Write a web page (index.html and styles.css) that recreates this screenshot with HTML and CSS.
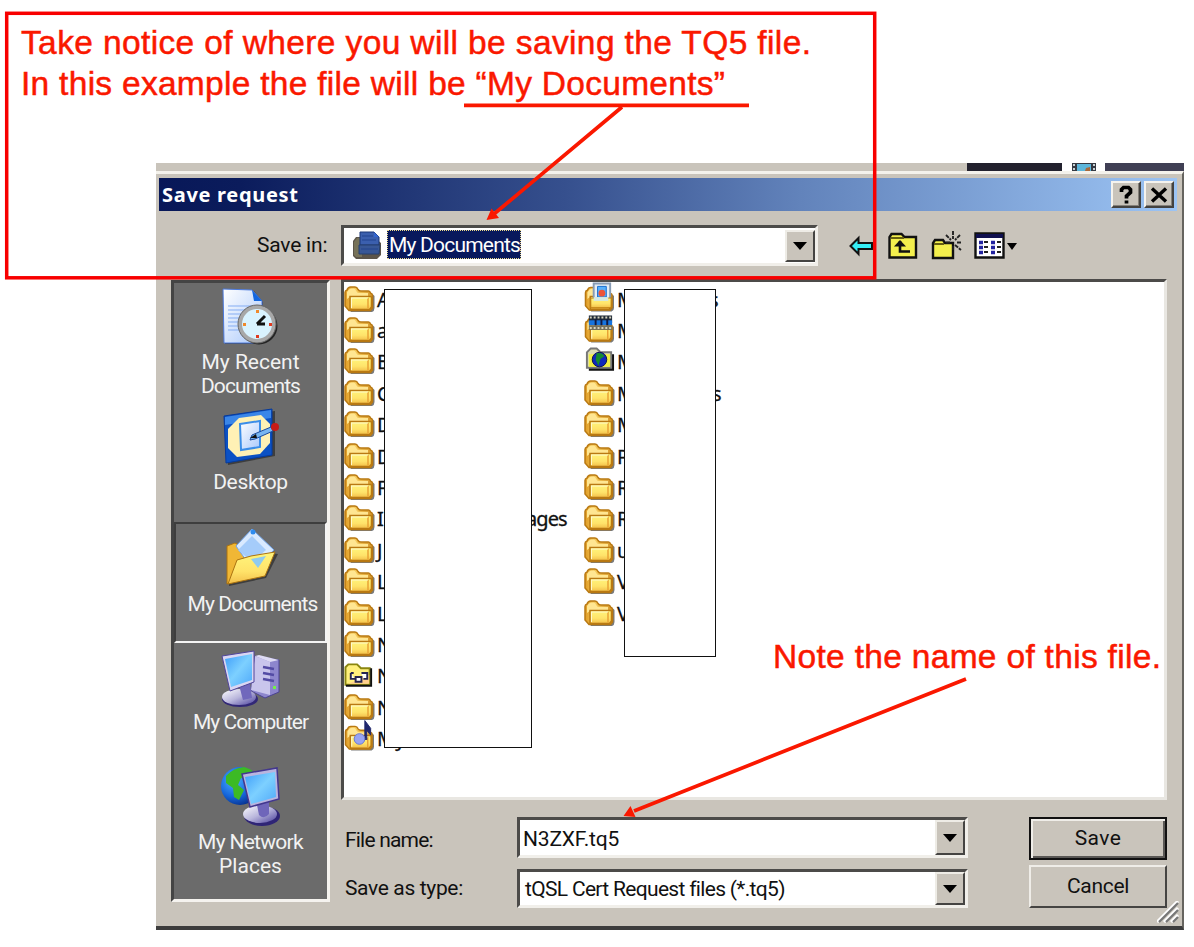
FILE: index.html
```html
<!DOCTYPE html>
<html lang="en">
<head>
<meta charset="utf-8">
<title>Save request</title>
<link rel="stylesheet" href="styles.css">
</head>
<body>
<svg class="defs" width="0" height="0" aria-hidden="true">
  <defs>
    <linearGradient id="gold" x1="0" y1="0" x2="0" y2="1"><stop offset="0" stop-color="#fff57c"/><stop offset=".6" stop-color="#ffe36a"/><stop offset="1" stop-color="#f3bf49"/></linearGradient>
    <linearGradient id="goldback" x1="0" y1="0" x2="1" y2="0"><stop offset="0" stop-color="#e09c26"/><stop offset=".4" stop-color="#f6cb5c"/><stop offset="1" stop-color="#d4952b"/></linearGradient>
    <linearGradient id="paper" x1="0" y1="0" x2="1" y2="1"><stop offset="0" stop-color="#ffffff"/><stop offset="1" stop-color="#a9c8fb"/></linearGradient>
    <linearGradient id="screen" x1="0" y1="0" x2="1" y2="1"><stop offset="0" stop-color="#3d9dfa"/><stop offset=".5" stop-color="#7dd0ff"/><stop offset="1" stop-color="#4fa9fa"/></linearGradient>
    <linearGradient id="metal" x1="0" y1="0" x2="1" y2="1"><stop offset="0" stop-color="#ffffff"/><stop offset=".5" stop-color="#b9b6dc"/><stop offset="1" stop-color="#4a409c"/></linearGradient>
    <radialGradient id="globe" cx=".35" cy=".35" r=".7"><stop offset="0" stop-color="#4fb0ff"/><stop offset=".6" stop-color="#1769dd"/><stop offset="1" stop-color="#06318f"/></radialGradient>
    <symbol id="folder" viewBox="0 0 31 28">
      <path d="M4 23L7 27H28Q30.500 26 30.500 23V11l-2-2v14z" fill="#222" opacity=".6"/>
      <path d="M1 21V7.500Q1 5.500 3 5Q4 2 6.500 2H11q2 0 3 2.500Q15 6 17 6H24.500Q26 6 26.500 8Q28.500 8.500 28.500 10.500V23l-2 2.500H5z" fill="url(#goldback)" stroke="#b97912" stroke-width="1.500"/>
      <path d="M3 7q2-3.500 4.500-3.500H10q1 0 2.500 3Q13 8 15.500 8H24v3H7L3 14z" fill="#ffe692"/>
      <path d="M6 11.500h20.500q1 0 1 1.500v9l-2 2.500H6z" fill="url(#gold)" stroke="#b97912" stroke-width="1.500"/>
      <path d="M24 13v10.500" stroke="#e9a334" stroke-width="1.500"/><path d="M7 13h17M7.500 13v10" stroke="#fff9cf"/>
    </symbol>
  </defs>
</svg>

<main class="page">
  <section class="dialog">
    <div class="behind">
      <span class="dark first"></span>
      <svg width="24" height="8" viewBox="0 0 24 8"><path fill="#353942" d="M0 0h24v8H0z"/><path fill="#5db6da" d="M5 1h14v7H5z"/><path fill="#c9d2d5" d="M1 1h2v2H1zM1 5h2v2H1zM21 1h2v2h-2zM21 5h2v2h-2z"/><path fill="#a8683a" d="M14 5l4-1v4h-5z"/></svg>
      <span class="dark last"></span>
    </div>
    <div class="window">
      <header class="titlebar">
        <h1>Save request</h1>
        <button class="capbtn"><svg width="16" height="20" viewBox="0 0 16 20"><path d="M3.500 7V4.500L5.500 2.500h5l2 2v3l-4 3.500v2.500M8.500 15.500v3" fill="none" stroke="#000" stroke-width="3.700"/></svg></button>
        <button class="capbtn"><svg width="18" height="16" viewBox="0 0 18 16"><path d="M2 1.500l14 13M16 1.500l-14 13" stroke="#000" stroke-width="3.400"/></svg></button>
      </header>

      <div class="toolbar">
        <label>Save in:</label>
        <div class="combo place">
          <svg class="placeicon" width="30" height="29" viewBox="0 0 30 29"><path d="M1 10l3-4h18l7 6v12l-4 4H4l-3-3z" fill="#5c554a"/><path d="M2 11l3-4h5v19H4l-2-2z" fill="#777259"/><path d="M8 1h14l5 5v8H8z" fill="#3b5fae" stroke="#1b3676"/><path d="M22 1v5h5" fill="#3265d0"/><path d="M7 14h21l-1 9H7z" fill="#385796" stroke="#27406f"/><path d="M10 5h11M10 9h14M9 18h17" stroke="#23458f"/></svg>
          <span class="selected">My Documents</span>
          <i class="drop"></i>
        </div>
        <div class="tools">
          <svg class="back" width="24" height="22" viewBox="0 0 24 22"><path d="M1.500 11l8-8v5H23v6H9.500v5z" fill="#35eef5" stroke="#111" stroke-width="2"/></svg>
          <svg class="up" width="30" height="28" viewBox="0 0 30 28"><path d="M1.500 25.500V5l2-3h10l3 3H28v20.500z" fill="#f3ef4d" stroke="#111" stroke-width="2.400"/><path d="M3 6h13" stroke="#665f10" stroke-width="2"/><path d="M12 9v10.500h10" fill="none" stroke="#111" stroke-width="2.600"/><path d="M12 8l-6 6.500h12z" fill="#111"/></svg>
          <svg class="new" width="32" height="32" viewBox="0 0 32 32"><path d="M2 29V14l2-3h8l2 3h8v15z" fill="#f3ef4d" stroke="#111" stroke-width="2.400"/><path d="M3 15h10" stroke="#665f10" stroke-width="2"/><path d="M22 2v8M22 17v5M15 6l5 5M29 6l-5 5M26 13.500h5M24 16l6 5M15 13.500h4" stroke="#222" stroke-width="1.900" stroke-dasharray="4 1"/></svg>
          <svg class="view" width="31" height="27" viewBox="0 0 31 27"><path d="M1.500 1.500h28v24h-28z" fill="#fff" stroke="#111" stroke-width="2.400"/><path d="M2 2h27v4H2z" fill="#10104f"/><path d="M5 10.500h4M5 15.500h4M5 20.500h4M17 10.500h4M17 15.500h4M17 20.500h4" stroke="#2222a0" stroke-width="3.500"/><path d="M10 10h4M10 15h4M10 20h4M23 10h4M23 15h4M23 20h4" stroke="#222" stroke-width="2"/></svg>
          <i class="caret"></i>
        </div>
      </div>

      <div class="body">
        <nav class="places">
          <a class="p1"><svg width="58" height="58" viewBox="0 0 58 58"><path d="M3 2l29 1 9 11v42H3z" fill="#222" opacity=".6"/><path d="M1 1l29 1 10 11v42H2z" fill="url(#paper)" stroke="#4b79dd"/><path d="M30 2l2 11h8z" fill="#1467df"/><path d="M6 18h24M6 22h20M6 26h14M6 30h12M6 34h10M6 38h10M6 42h12" stroke="#85adf3"/><circle cx="37" cy="38" r="18.500" fill="#252525"/><circle cx="35" cy="36" r="17" fill="#d9f3ff" stroke="#a8a8a8" stroke-width="4"/><circle cx="35" cy="36" r="19" fill="none" stroke="#666"/><path d="M35 36l8-8M35 36h8" stroke="#111" stroke-width="3"/><path d="M34 22h3v3h-3zM21 35h3v3h-3z" fill="#f08a2c"/><path d="M47 35h3v3h-3zM34 47h3v3h-3z" fill="#e03a20"/></svg><span><span class="recent">My Recent</span><span class="docs">Documents</span></span></a>
          <a class="p2"><svg width="58" height="58" viewBox="0 0 58 58"><path d="M4 10L53 4v45L6 58z" fill="#202020" opacity=".6"/><path d="M2 9L50 2v46L4 56z" fill="#0b51c4" stroke="#063a9c"/><path d="M3 10L49 3v8L3 18z" fill="#3a86e8"/><path d="M17 11l22-3 9 9v19l-10 11-23 3-9-9V22z" fill="#fff1b5"/><path d="M18 17l20-3v26l-19 3z" fill="url(#paper)" stroke="#3b8de8" stroke-width="2"/><path d="M30 28l19-8 2 4-18 8-5 1z" fill="#77b5f2" stroke="#1b499a"/><circle cx="53" cy="20" r="4" fill="#c61b16"/><path d="M28 31l6-4 1 4z" fill="#111"/></svg><span>Desktop</span></a>
          <a class="p3 active"><svg width="54" height="60" viewBox="0 0 54 60"><path d="M5 58V20l7-2 9 5 33 3-12 24z" fill="#202020" opacity=".6"/><path d="M3 18l8-3 9 5v30L3 56z" fill="#f0b735" stroke="#ab7311"/><path d="M12 18L28 1l22 21-21 20z" fill="#d9eaff" stroke="#6ea2e8"/><path d="M28 8l14 14-14 12-14-12z" fill="#a5ccfa"/><circle cx="29" cy="4" r="2.500" fill="#2e8cf0"/><path d="M4 56l9-24 14-4 24-4-10 24z" fill="url(#gold)" stroke="#ab7311"/><path d="M27 31l15-3-8 12z" fill="#8fcbef"/></svg><span>My Documents</span></a>
          <a class="p4"><svg width="60" height="58" viewBox="0 0 60 58"><path d="M34 6l24 4v32L44 48 30 41z" fill="#8d86cd" stroke="#4b4292"/><path d="M34 6l15 6v33l-19-5z" fill="#c9c5ec"/><path d="M34 6l15 6 9-2-20-5z" fill="#dedbf4"/><path d="M42 17l11 2M42 23l11 2M42 29l11 2" stroke="#534ba4" stroke-width="2.500"/><path d="M52 36h3v3h-3z" fill="#72f04a"/><ellipse cx="19" cy="49" rx="18" ry="8" fill="#322877"/><ellipse cx="18" cy="47" rx="17" ry="8" fill="url(#metal)"/><path d="M18 35l11-2 2 15-9 2z" fill="#7068bc"/><path d="M1 6L33 1v31L9 41z" fill="#d9d6f2" stroke="#50459b"/><path d="M4 9l27-5v26L10 37z" fill="url(#screen)"/></svg><span>My Computer</span></a>
          <a class="p5"><svg width="60" height="62" viewBox="0 0 60 62"><circle cx="19" cy="21" r="19" fill="url(#globe)"/><path d="M5 11q7-8 18-9 8 2 10 6l-7 6-6-1-3 7 6 5-5 10-5-3-1-9-7-5z" fill="#3cba25"/><ellipse cx="41" cy="51" rx="18" ry="10" fill="#2f2576"/><ellipse cx="39" cy="49" rx="17" ry="9" fill="url(#metal)"/><path d="M35 35h13v14q-5 6-10 1z" fill="#6f66ba"/><path d="M21 9l35-6 2 31-29 8z" fill="#b9b5df" stroke="#43378e" stroke-width="1.500"/><path d="M24 12l30-5 1 25-25 7z" fill="url(#screen)"/></svg><span><span class="network">My Network</span>Places</span></a>
        </nav>

        <div class="main">
          <div class="files">
            <ul class="col">
              <li><svg><use href="#folder"/></svg><b>A</b></li>
              <li><svg><use href="#folder"/></svg><b>a</b></li>
              <li><svg><use href="#folder"/></svg><b>B</b></li>
              <li><svg><use href="#folder"/></svg><b>C</b></li>
              <li><svg><use href="#folder"/></svg><b>D</b></li>
              <li><svg><use href="#folder"/></svg><b>D</b></li>
              <li><svg><use href="#folder"/></svg><b>F</b></li>
              <li><svg><use href="#folder"/></svg><b>I</b><em class="tail-a">ages</em></li>
              <li><svg><use href="#folder"/></svg><b>J</b></li>
              <li><svg><use href="#folder"/></svg><b>L</b></li>
              <li><svg><use href="#folder"/></svg><b>L</b></li>
              <li><svg><use href="#folder"/></svg><b>N</b></li>
              <li><svg viewBox="0 0 32 28"><path d="M1.500 24V6l3-3h9l4 4h9v17z" fill="#fff07c" stroke="#8a8610" stroke-width="2"/><path d="M4 23l22-9v9z" fill="#ffcf8c"/><path d="M2 25h26V7" fill="none" stroke="#111" stroke-width="2"/><path d="M7 12v6h4M7 12h3M12 16h6v5h-6zM18 12h6v6h-4" fill="#fff" stroke="#24244f" stroke-width="2"/></svg><b>N</b></li>
              <li><svg><use href="#folder"/></svg><b>N</b></li>
              <li><svg viewBox="0 0 32 28" class="over"><use href="#folder" width="32" height="28"/><path d="M21.500 16V-4l6 8v7l-4-5v10" fill="#20276c" stroke="#20276c"/><circle cx="16" cy="15" r="5.500" fill="#98a4f2" stroke="#6878ce"/></svg><b>My</b></li>
            </ul>
            <ul class="col second">
              <li><svg viewBox="0 0 32 28" class="over"><use href="#folder" width="32" height="28"/><path d="M10-2h17v18H10z" fill="#e4ecf5" stroke="#879bb4" stroke-width="2"/><path d="M14 1h9v11h-9z" fill="#58b0fb" stroke="#156cd0"/><circle cx="18.500" cy="8" r="3.500" fill="#ed5338"/><path d="M7 13h21v10H7z" fill="url(#gold)" stroke="#bd7c10"/><path d="M10 12h15v4H10z" fill="#d5e9e4"/></svg><b>M</b><em class="tail-b">s</em></li>
              <li><svg viewBox="0 0 32 28" class="over"><use href="#folder" width="32" height="28"/><path d="M5-1h24v8H5z" fill="#222c39"/><path d="M5 4h24v5H5z" fill="#1674e0"/><path d="M5 9h24v5H5z" fill="#75705d"/><path d="M6 1h23M6 12h23" stroke="#d6d3c0" stroke-width="2" stroke-dasharray="2 2"/><path d="M12 3v6M18 3v6M24 3v6" stroke="#111a42" stroke-width="2"/></svg><b>M</b></li>
              <li><svg viewBox="0 0 32 28"><path d="M5 24h26V7h-3v14H5z" fill="#111"/><path d="M3 21V5l4-4h6l4 4h11v16z" fill="#dedcb0" stroke="#777" stroke-width="2"/><path d="M5 7h22v13H5z" fill="#f2ef43"/><circle cx="16" cy="12.500" r="7.500" fill="#1028bc" stroke="#090e50"/><path d="M13 6q6-1 8 3l-4 3-2 7-3-6z" fill="#168b30"/></svg><b>M</b></li>
              <li><svg><use href="#folder"/></svg><b>M</b><em class="tail-c">s</em></li>
              <li><svg><use href="#folder"/></svg><b>M</b></li>
              <li><svg><use href="#folder"/></svg><b>P</b></li>
              <li><svg><use href="#folder"/></svg><b>R</b></li>
              <li><svg><use href="#folder"/></svg><b>R</b></li>
              <li><svg><use href="#folder"/></svg><b>u</b></li>
              <li><svg><use href="#folder"/></svg><b>V</b></li>
              <li><svg><use href="#folder"/></svg><b>V</b></li>
            </ul>
          </div>
          <div class="form">
            <label class="namelabel">File name:</label><div class="combo"><span class="value name">N3ZXF.tq5</span><i class="drop"></i></div><button class="action default">Save</button>
            <label class="typelabel">Save as type:</label><div class="combo typecombo"><span class="value type">tQSL Cert Request files (*.tq5)</span><i class="drop"></i></div><button class="action cancel">Cancel</button>
          </div>
        </div>
      </div>
      <svg class="grip" width="22" height="22" viewBox="0 0 22 22"><path d="M0 21L21 0M7 21L21 7M14 21l7-7" stroke="#fff" stroke-width="3"/><path d="M2 21L21 2M9 21L21 9M16 21l5-5" stroke="#777" stroke-width="2.200"/></svg>
    </div>
  </section>

  <div class="mask left"></div>
  <div class="mask right"></div>
  <svg class="notes" width="1194" height="947" viewBox="0 0 1194 947">
    <rect x="6.700" y="13.300" width="868" height="264.500" fill="none" stroke="#f80000" stroke-width="3.500"/>
    <g class="note-text">
      <text x="21" y="54" textLength="790">Take notice of where you will be saving the TQ5 file.</text>
      <text x="21" y="95" textLength="704">In this example the file will be “My Documents”</text>
      <text x="773" y="667.500" textLength="388">Note the name of this file.</text>
    </g>
    <path d="M464 105.300h285M622 107L494 214M966 679L634 811" stroke="#fa1800" stroke-width="3.700" fill="none"/>
    <path d="M486.500 220l5-11.500 7.500 9.500zM623.500 816l7-10 5 11z" fill="#fa1800"/>
  </svg>
</main>
</body>
</html>
```
FILE: styles.css
```css
* { box-sizing: border-box; }
body { margin: 0; background: #fff; overflow: hidden; }
.page { position: relative; width: 1194px; height: 947px; padding: 163px 0 0 156px; }
.defs { position: absolute; }
.dialog {
  width: 1028px; height: 767px; display: flex; flex-direction: column;
  background: #c9c4bb; color: #111;
  font: 21px/24px Roboto, "Liberation Sans", sans-serif;
}
.behind { display: flex; height: 8px; padding-left: 811px; overflow: hidden; flex: none; }
.behind svg { flex: none; padding: 0; margin: 0; box-shadow: -10px 0 #fff, 9px 0 #fff; margin: 0 9px 0 10px; }
.dark { height: 8px; background: #22212e; flex: none; }
.dark.first { width: 95px; }
.dark.last { flex: 1; background: #403f54; }
.window {
  position: relative; flex: 1; display: flex; flex-direction: column;
  border-top: 3px solid #f4f2ec; border-right: 2px solid #66645f; border-bottom: 4px solid #3c3c3c;
  padding: 4px 5px 0 3px;
}
.titlebar {
  display: flex; align-items: center; flex: none; height: 33px; padding: 0 3px 0 3px;
  background: linear-gradient(90deg, #081858 0, #0b1c5c 8%, #36508e 40%, #6283bb 63%, #9cc4f4 100%);
}
h1 { margin: 0 auto 0 0; color: #fff; font: bold 20px/30px "Noto Sans", sans-serif; letter-spacing: .7px; }
button { font: inherit; color: inherit; padding: 0; border-radius: 0; }
.capbtn {
  width: 30px; height: 27px; margin-left: 3px; display: flex; align-items: center; justify-content: center;
  background: #c9c4bb; border: 2px solid; border-color: #f5f3ee #44423f #44423f #f5f3ee; box-shadow: inset -1px -1px #85817a;
}
.toolbar { display: flex; flex: none; height: 69px; padding: 14px 0 0 98px; }
.toolbar label { width: 84px; padding-top: 8px; letter-spacing: -.2px; }
.combo {
  display: flex; align-items: stretch; height: 41px; background: #fff;
  border: 3px solid; border-color: #4c4b49 #f1efea #f1efea #4c4b49;
}
.combo.place { width: 477px; padding: 2px 0 1px 8px; }
.placeicon { margin: 1px 5px 0 0; }
.selected {
  height: 29px; padding: 0 0 0 2px; width: 134px; color: #fff; background: #08185c;
  outline: 1px dotted #ead98b; outline-offset: -1px; line-height: 31px; letter-spacing: -.8px; white-space: nowrap;
}
.drop {
  width: 30px; flex: none; margin-left: auto; background: #c9c4bb; border: 2px solid; border-color: #eeece6 #454442 #454442 #eeece6;
  display: flex; align-items: center; justify-content: center;
}
.drop::before, .caret { content: ""; border: solid transparent; border-width: 8px 7px 0; border-top-color: #000; }
.tools { display: flex; align-items: flex-start; padding: 7px 0 0 31px; }
.tools .back { margin: 3px 15px 0 0; }
.tools .new { margin: -3px 11px 0 13px; }
.tools .view { margin-right: 2px; }
.caret { margin-top: 11px; border-width: 7px 5px 0; }
.body { display: flex; }
.places {
  width: 159px; height: 622px; margin-left: 12px; flex: none; background: #6b6b6b; color: #f2f2f2; text-align: center;
  border: 3px solid; border-color: #444 #f5f3ef #f5f3ef #444;
  display: flex; flex-direction: column;
}
.places a { display: flex; flex-direction: column; align-items: center; }
.places a span { display: block; white-space: nowrap; }
.p1 { height: 123px; padding-top: 5px; }
.p1 > span { margin-top: 4px; }
.docs { letter-spacing: -.9px; }
.p2 { height: 116px; padding-top: 1px; }
.p2 span { margin-top: 5px; letter-spacing: -.3px; }
.p3 { height: 121px; padding-top: 4px; border: 2px solid; border-color: #3e3e3e #f4f4f4 #f4f4f4 #3e3e3e; }
.p3 span { margin: 4px 0 0 4px; letter-spacing: -.9px; }
.p4 { height: 119px; padding-top: 7px; }
.p4 span { margin-top: 2px; letter-spacing: -1px; }
.p5 { padding-top: 3px; }
.p5 > span { margin-top: 3px; }
.network { letter-spacing: -.7px; }
.main { margin-left: 11px; flex: none; }
.files {
  width: 826px; height: 521px; margin-top: -1px; background: #fff; display: flex;
  border: 3px solid; border-color: #4c4b49 #e9e7e2 #e9e7e2 #4c4b49;
}
.col { list-style: none; margin: 0; padding: 1px 0 0; width: 240px; }
.col li { height: 31.4px; display: flex; align-items: center; font-family: "Noto Sans", sans-serif; font-size: 20px; }
.col svg { width: 31px; height: 28px; margin-right: 2px; flex: none; overflow: visible; }
.col b, .col em { font-weight: 400; font-style: normal; width: 18px; flex: none; padding-top: 2px; -webkit-text-stroke: .3px #111; }
.col .tail-a { margin-left: 131px; letter-spacing: -.9px; }
.col .tail-b { margin-left: 74px; }
.col .tail-c { margin-left: 77px; }
.form {
  display: grid; grid-template-columns: 172px 451px 138px; column-gap: 0; grid-template-rows: 43px 43px; row-gap: 5px;
  padding: 17px 0 0 4px;
}
.form label { padding-top: 11px; }
.form .namelabel { letter-spacing: -.8px; }
.form .combo { width: 451px; }
.form .action { margin-left: 61px; width: 138px; height: 43px; padding-bottom: 2px; background: #c9c4bb; border: 2px solid; border-color: #efede8 #454442 #454442 #efede8; }
.form .action.default { border: 2px solid #111; box-shadow: inset 2px 2px #efede8, inset -2px -2px #5a5855; letter-spacing: .4px; }
.form .action.cancel { letter-spacing: -.3px; }
.form .typelabel { padding-top: 11px; letter-spacing: -.35px; }
.form .typecombo { margin-top: 4px; height: 39px; }
.value { align-self: center; padding-left: 3px; white-space: nowrap; }
.value.name { padding-top: 2px; letter-spacing: -.2px; }
.value.type { padding-left: 5px; letter-spacing: -.68px; }
.grip { position: absolute; right: 3px; bottom: 3px; }
.mask { position: absolute; top: 289px; background: #fff; border: 1px solid #111; }
.mask.left { left: 384px; width: 148px; height: 459px; }
.mask.right { left: 624px; width: 92px; height: 368px; }
.notes { position: absolute; inset: 0; }
.note-text { fill: #fa1800; stroke: #fa1800; stroke-width: .5px; font: 33.5px "Liberation Sans", Arial, sans-serif; }
```
